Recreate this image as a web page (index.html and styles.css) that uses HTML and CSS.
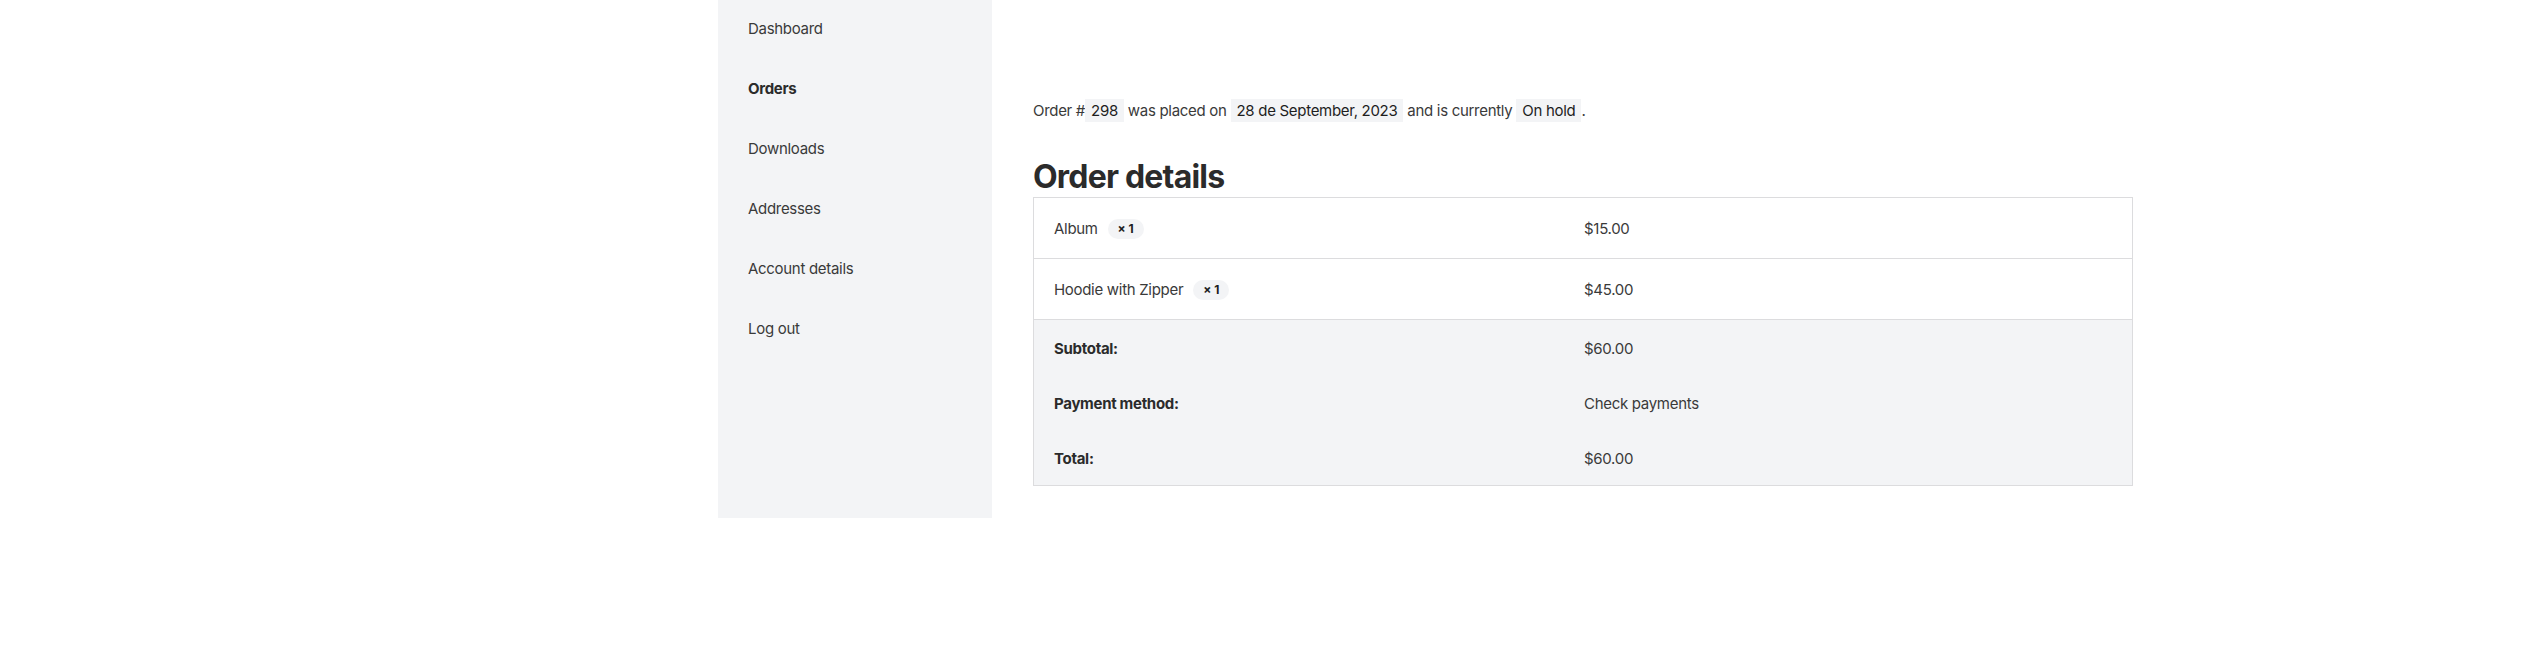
FILE: index.html
```html
<!DOCTYPE html>
<html lang="en">
<head>
    <meta charset="UTF-8">
    <meta name="viewport" content="width=device-width, initial-scale=1.0">
    <title>My account - Orders</title>
    <link rel="stylesheet" href="styles.css">
</head>
<body>
    <div class="account">
        <nav class="account-nav">
            <ul>
                <li><a href="#">Dashboard</a></li>
                <li class="active"><a href="#">Orders</a></li>
                <li><a href="#">Downloads</a></li>
                <li><a href="#">Addresses</a></li>
                <li><a href="#">Account details</a></li>
                <li><a href="#">Log out</a></li>
            </ul>
        </nav>

        <div class="account-content">
            <p class="order-info">Order #<mark>298</mark> was placed on <mark>28 de September, 2023</mark> and is currently <mark>On hold</mark>.</p>

            <h2 class="order-title">Order details</h2>
            <table class="order-table">
                <tbody>
                    <tr>
                        <td class="name">Album <span class="qty">&times; 1</span></td>
                        <td>$15.00</td>
                    </tr>
                    <tr>
                        <td class="name">Hoodie with Zipper <span class="qty">&times; 1</span></td>
                        <td>$45.00</td>
                    </tr>
                </tbody>
                <tfoot>
                    <tr>
                        <th>Subtotal:</th>
                        <td>$60.00</td>
                    </tr>
                    <tr>
                        <th>Payment method:</th>
                        <td>Check payments</td>
                    </tr>
                    <tr>
                        <th>Total:</th>
                        <td>$60.00</td>
                    </tr>
                </tfoot>
            </table>
        </div>
    </div>
</body>
</html>
```

FILE: styles.css
```css
body {
    margin: 0;
    font-family: Inter, "Noto Sans", sans-serif;
    font-size: 15px;
    letter-spacing: -0.3px;
    color: #3a3a3a;
    background: #fff;
}
.account {
    display: flex;
    align-items: flex-start;
    padding-left: 718px;
}
.account-nav {
    width: 274px;
    background: #f3f4f6;
    padding-bottom: 158px;
}
.account-nav ul {
    list-style: none;
    margin: 0;
    padding: 0;
}
.account-nav a {
    display: block;
    padding: 17px 30px 19px;
    line-height: 24px;
    color: #3a3a3a;
    text-decoration: none;
}
.account-nav .active a {
    font-weight: 700;
    color: #2b2b2b;
}
.account-content {
    margin-left: 41px;
    padding-top: 99px;
    width: 1100px;
}
.order-info {
    margin: 0;
    line-height: 24px;
}
.order-info mark {
    background: #f3f4f6;
    color: #1e1e1e;
    padding: 2px 6px;
}
.order-title {
    margin: 35px 0 1px;
    font-size: 32px;
    line-height: 38px;
    font-weight: 700;
    letter-spacing: -0.8px;
    color: #2b2b2b;
}
.order-table {
    width: 100%;
    border-collapse: collapse;
    border: 1px solid #dcdcde;
    table-layout: fixed;
}
.order-table td, .order-table th {
    text-align: left;
    padding: 19px 20px 17px;
    line-height: 24px;
}
.order-table td:first-child, .order-table th {
    width: 490px;
}
.order-table tbody tr {
    border-bottom: 1px solid #dcdcde;
}
.order-table tfoot {
    background: #f3f4f6;
}
.order-table tfoot th, .order-table tfoot td {
    padding: 17px 20px 14px;
}
.order-table th {
    font-weight: 700;
    color: #2b2b2b;
}
.qty {
    display: inline-block;
    margin-left: 6px;
    padding: 0 10px;
    line-height: 20px;
    border-radius: 10px;
    background: #f3f4f6;
    font-size: 12px;
    font-weight: 700;
    letter-spacing: 0;
    color: #1e1e1e;
    vertical-align: 1px;
}
```
